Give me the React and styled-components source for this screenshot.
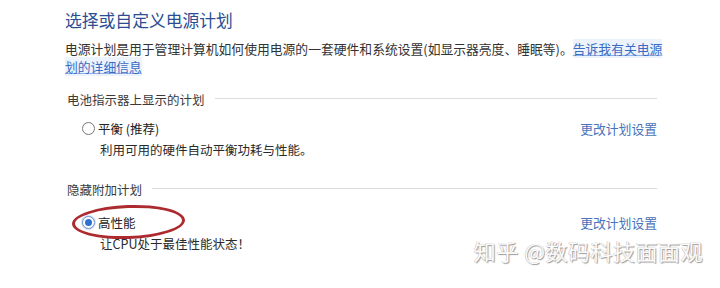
import React from 'react';
import styled, { createGlobalStyle } from 'styled-components';

const Global = createGlobalStyle`
  html, body {
    margin: 0;
    padding: 0;
    background: #fff;
  }
  body {
    font-family: "Noto Sans CJK SC", "Noto Sans", sans-serif;
    color: #333;
  }
`;

const Page = styled.div`
  position: relative;
  width: 720px;
  height: 288px;
  overflow: hidden;
  background: #fff;
`;

const Content = styled.div`
  width: 592px;
  padding: 8px 0 0 65px;
  display: flex;
  flex-direction: column;
`;

const Title = styled.h1`
  margin: 0;
  font-size: 16.8px;
  line-height: 24px;
  font-weight: 400;
  color: #2d4d93;
`;

const Intro = styled.p`
  margin: 8px 0 0;
  width: 610px;
  font-size: 12.8px;
  line-height: 18px;
  color: #333;
  white-space: nowrap;
`;

const Link = styled.a`
  color: #3b6cc4;
  text-decoration: underline;
  text-decoration-color: #8fb0e6;
  background: rgba(200, 220, 250, 0.35);
  cursor: pointer;
`;

const Section = styled.div`
  display: flex;
  align-items: center;
  gap: 10px;
  margin-top: ${p => p.$top}px;
  padding-left: 2px;
  font-size: 12.5px;
  line-height: 18px;
  color: #3a3a3a;

  &::after {
    content: '';
    flex: 1;
    height: 1px;
    margin-top: -3px;
    background: #dcdcdc;
  }
`;

const PlanRow = styled.div`
  position: relative;
  display: flex;
  align-items: center;
  justify-content: space-between;
  margin-top: ${p => p.$top}px;
  padding-left: 17px;
  height: 18px;
  font-size: 12.5px;
`;

const PlanLabel = styled.label`
  display: flex;
  align-items: center;
  gap: 3px;
  color: #222;
`;

const Radio = styled.span`
  width: 11px;
  height: 11px;
  border-radius: 50%;
  border: 1px solid ${p => (p.$on ? '#6b8fd0' : '#777')};
  background: #fff;
  display: flex;
  align-items: center;
  justify-content: center;
  box-shadow: ${p => (p.$on ? '0 0 0 1px #d4e2f7' : 'none')};

  &::after {
    content: '';
    width: 7px;
    height: 7px;
    border-radius: 50%;
    background: ${p => (p.$on ? '#2f6fd0' : 'transparent')};
  }
`;

const ChangeLink = styled.a`
  color: #4a73bb;
  font-size: 12.8px;
  cursor: pointer;
`;

const PlanDesc = styled.div`
  margin-top: 4px;
  padding-left: 35px;
  font-size: 12.5px;
  line-height: 18px;
  color: #2a2a2a;
`;

const Mark = styled.span`
  position: absolute;
  left: 7px;
  top: -8px;
  width: 107px;
  height: 28px;
  border: 3px solid #ad2a2f;
  border-radius: 50%;
  transform: rotate(-2deg);
  pointer-events: none;
`;

const Watermark = styled.div`
  position: absolute;
  right: 17px;
  bottom: 25px;
  font-family: "Noto Sans CJK SC", sans-serif;
  font-size: 22px;
  line-height: 26px;
  color: #fbfbfb;
  letter-spacing: 0.5px;
  text-shadow: 1px 1px 1px #999, -0.5px -0.5px 0.5px #bbb;
`;

const plans = [
  {
    section: '电池指示器上显示的计划',
    sectionTop: 15,
    rowTop: 10,
    name: '平衡 (推荐)',
    desc: '利用可用的硬件自动平衡功耗与性能。',
    on: false,
  },
  {
    section: '隐藏附加计划',
    sectionTop: 22,
    rowTop: 14,
    name: '高性能',
    desc: '让CPU处于最佳性能状态！',
    on: true,
  },
];

export default function App() {
  return (
    <Page>
      <Global />
      <Content>
        <Title>选择或自定义电源计划</Title>
        <Intro>
          电源计划是用于管理计算机如何使用电源的一套硬件和系统设置(如显示器亮度、睡眠等)。<Link>告诉我有关电源</Link>
          <br />
          <Link>划的详细信息</Link>
        </Intro>
        {plans.map(p => (
          <React.Fragment key={p.name}>
            <Section $top={p.sectionTop}>{p.section}</Section>
            <PlanRow $top={p.rowTop}>
              <PlanLabel>
                <Radio $on={p.on} />
                {p.name}
              </PlanLabel>
              <ChangeLink>更改计划设置</ChangeLink>
              {p.on && <Mark />}
            </PlanRow>
            <PlanDesc>{p.desc}</PlanDesc>
          </React.Fragment>
        ))}
      </Content>
      <Watermark>知乎 @数码科技面面观</Watermark>
    </Page>
  );
}
